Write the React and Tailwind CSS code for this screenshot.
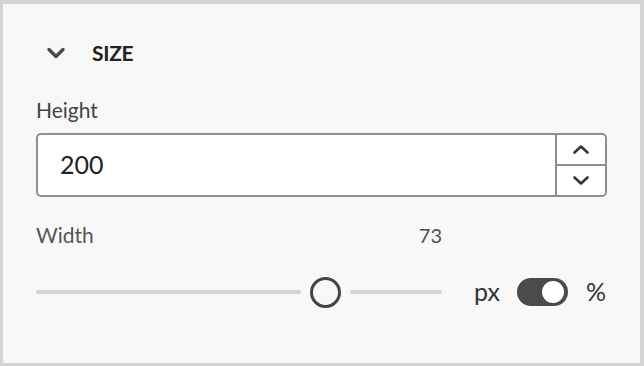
export default function App() {
  const value = 73
  return (
    <div className="w-[644px] h-[366px] bg-[#d5d5d5] pt-[4px] pl-[3px] pr-[4px] pb-[3px] font-['Lato',sans-serif]">
      <div className="h-full bg-[#f8f8f8] pl-[33px] pr-[33px] pt-[34px]">
        <div className="flex items-center h-[30px]">
          <svg width="20" height="14" viewBox="0 0 20 14" className="ml-[10px]">
            <path d="M3 3.5 L10 10.5 L17 3.5" fill="none" stroke="#4a4a4a" strokeWidth="3.4" strokeLinecap="round" strokeLinejoin="round" />
          </svg>
          <span className="ml-[26px] text-[21px] font-bold text-[#222] tracking-[-0.3px]">SIZE</span>
        </div>
        <div className="mt-[28px] text-[21px] leading-[28px] text-[#444]">Height</div>
        <div className="mt-[9px] flex h-[64px] rounded-[5px] border-2 border-[#8e8e8e] bg-white">
          <div className="flex-1 flex items-center pl-[22px] text-[25px] text-[#222]">200</div>
          <div className="w-[50px] border-l-2 border-[#8e8e8e] flex flex-col">
            <div className="flex-1 flex items-center justify-center border-b-2 border-[#8e8e8e]">
              <svg width="18" height="11" viewBox="0 0 18 11">
                <path d="M2.5 8.5 L9 2.5 L15.5 8.5" fill="none" stroke="#333" strokeWidth="2.6" strokeLinecap="round" strokeLinejoin="round" />
              </svg>
            </div>
            <div className="flex-1 flex items-center justify-center">
              <svg width="18" height="11" viewBox="0 0 18 11">
                <path d="M2.5 2.5 L9 8.5 L15.5 2.5" fill="none" stroke="#333" strokeWidth="2.6" strokeLinecap="round" strokeLinejoin="round" />
              </svg>
            </div>
          </div>
        </div>
        <div className="mt-[25px] flex w-[406px] justify-between text-[21px] leading-[26px]">
          <span className="text-[#555]">Width</span>
          <span className="text-[#505050] text-[20px]">{value}</span>
        </div>
        <div className="mt-[28px] flex items-center h-[32px]">
          <div className="w-[406px] flex items-center">
            <div className="w-[265px] h-[4px] rounded-full bg-[#d5d5d5]" />
            <div className="mx-[9px] w-[31px] h-[31px] rounded-full border-[3.5px] border-[#444] bg-[#f8f8f8]" />
            <div className="flex-1 h-[4px] rounded-full bg-[#d5d5d5]" />
          </div>
          <span className="ml-[32px] text-[25px] text-[#333]">px</span>
          <div className="ml-[17px] w-[51px] h-[28px] rounded-full bg-[#4b4b4b] flex items-center justify-end pr-[4px]">
            <div className="w-[22px] h-[22px] rounded-full bg-white" />
          </div>
          <span className="ml-[18px] text-[25px] text-[#333]">%</span>
        </div>
      </div>
    </div>
  )
}
